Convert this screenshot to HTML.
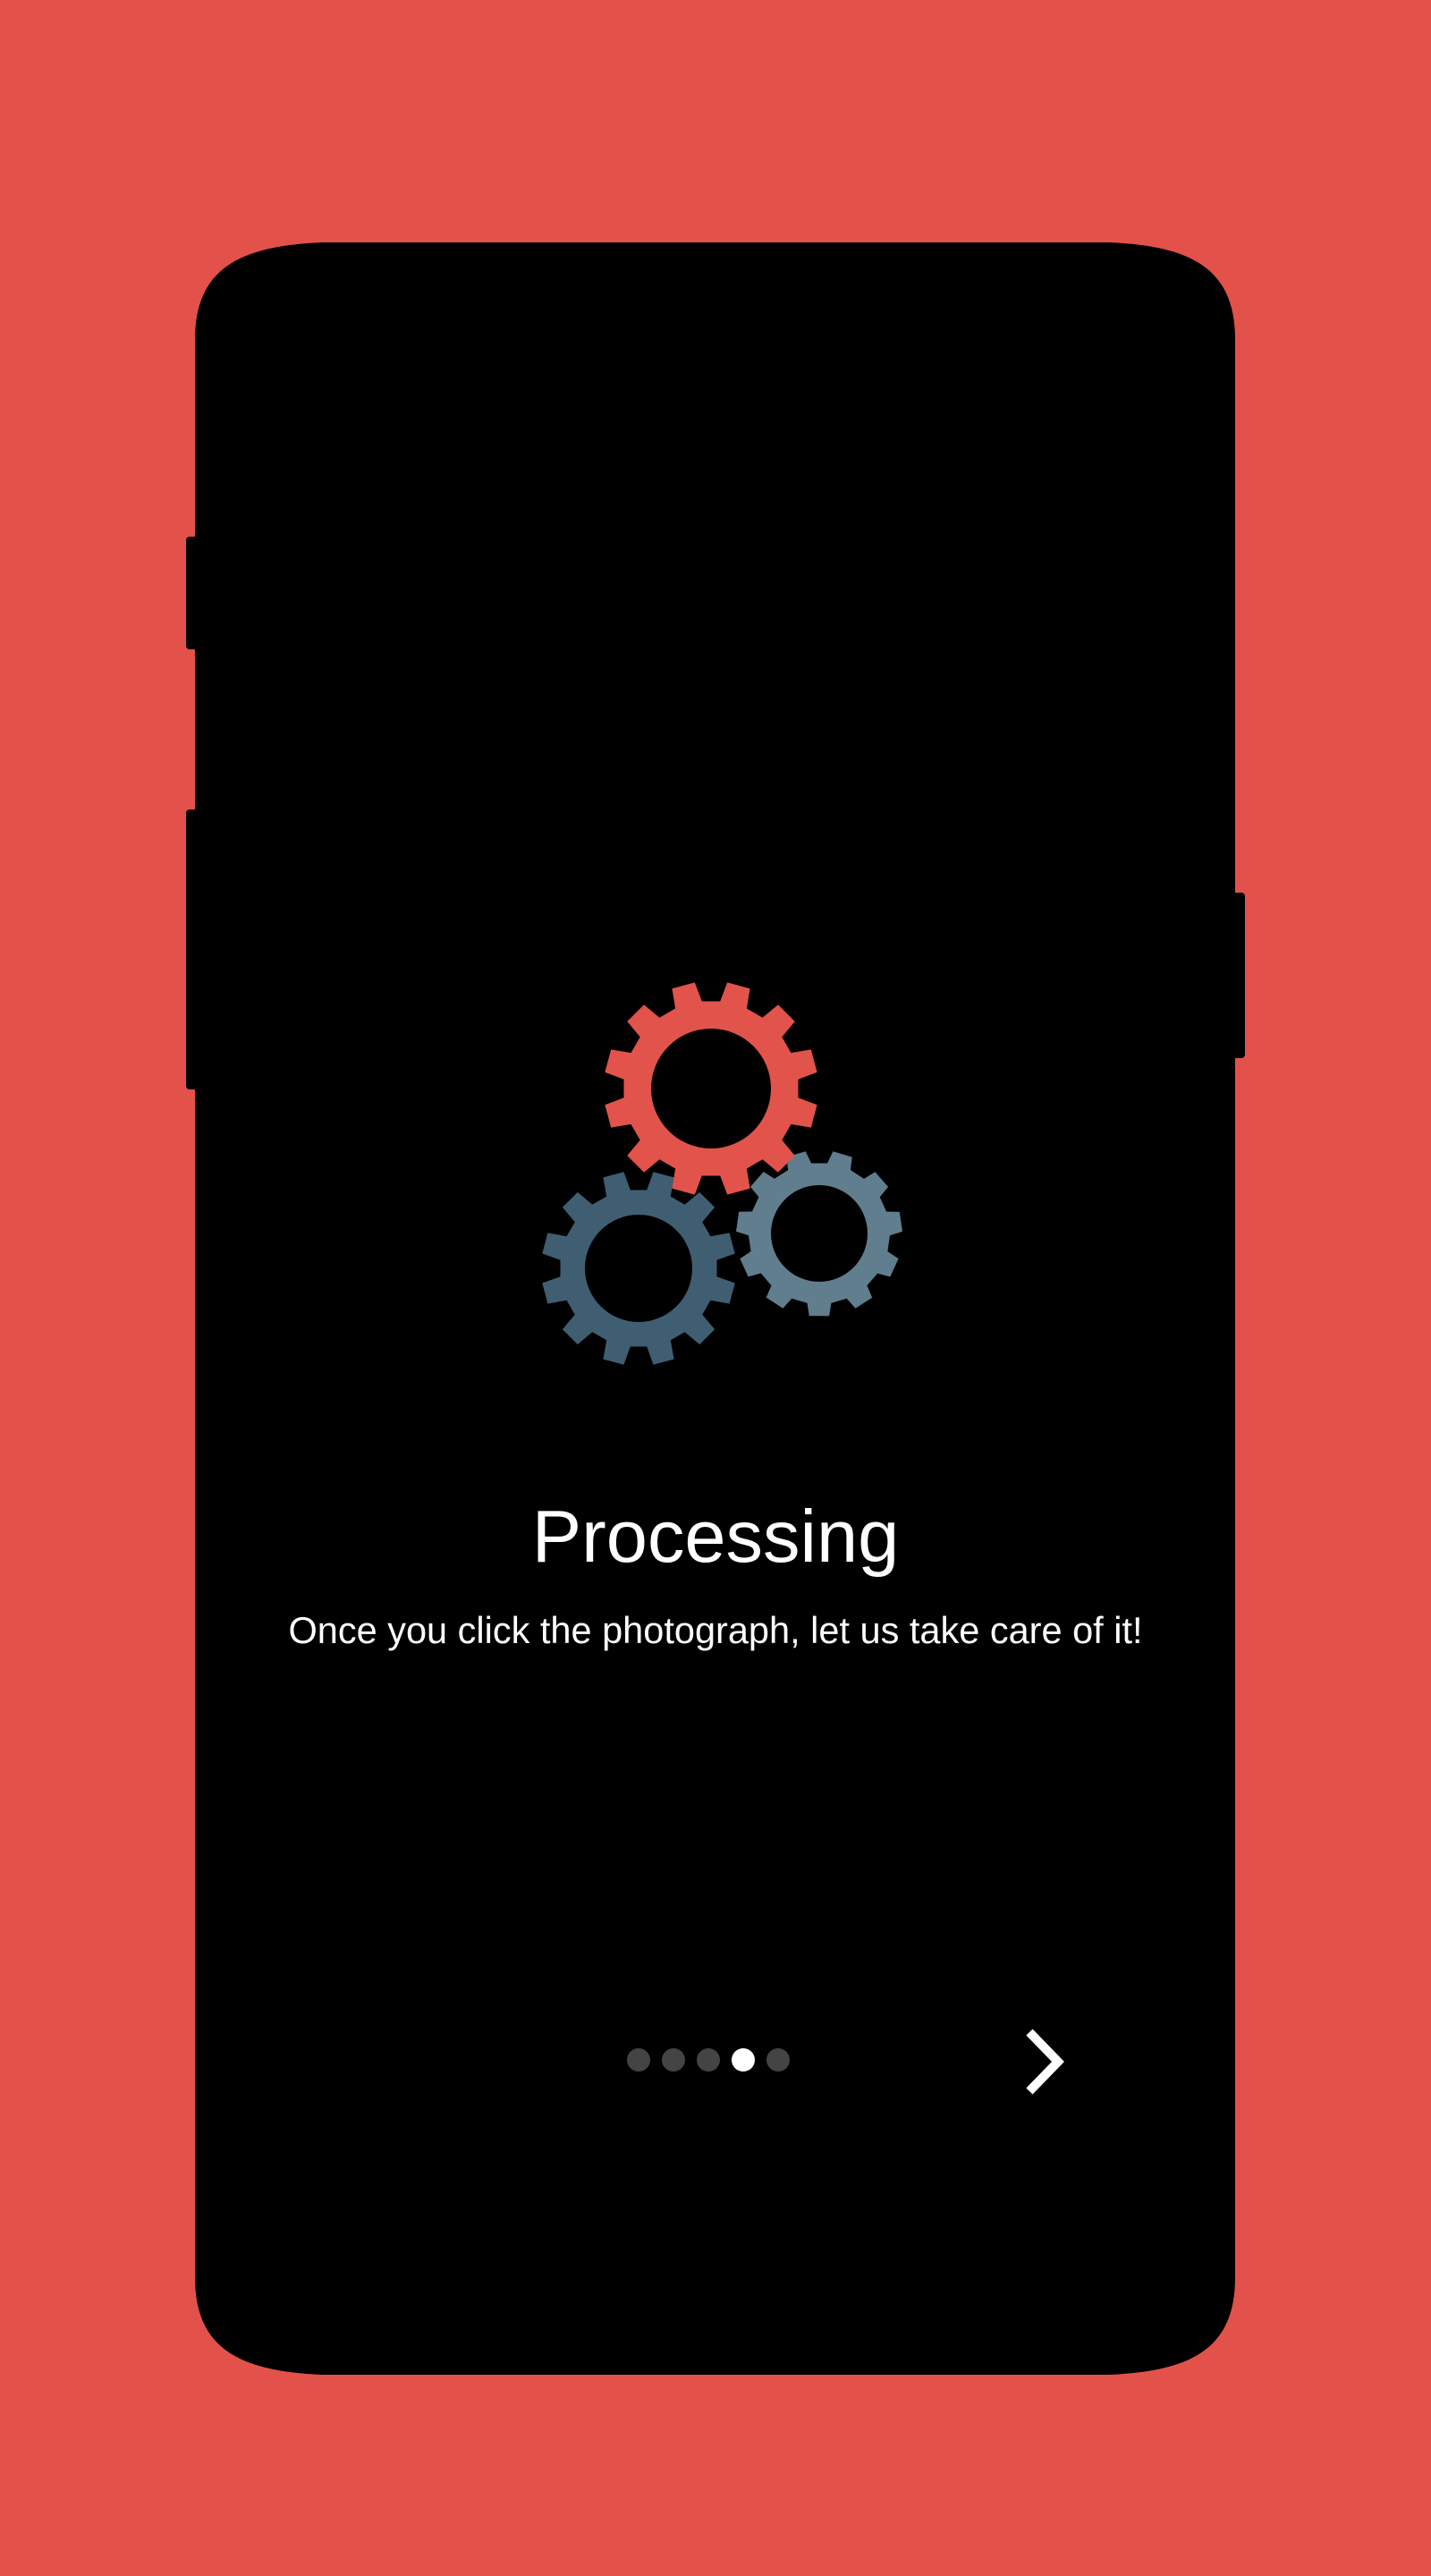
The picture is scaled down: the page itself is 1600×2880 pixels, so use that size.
<!DOCTYPE html>
<html><head><meta charset="utf-8"><style>
html,body{margin:0;padding:0;width:1600px;height:2880px;background:#E2524A;overflow:hidden}
svg{position:absolute;left:0;top:0}
.t{position:absolute;left:0;width:1600px;text-align:center;color:#fff;font-family:"Liberation Sans",sans-serif}
</style></head><body>
<svg width="1600" height="2880" viewBox="0 0 1600 2880">
<rect x="208" y="600" width="16" height="126" rx="4" fill="#000"/>
<rect x="208" y="905" width="16" height="313" rx="4" fill="#000"/>
<rect x="1375" y="998" width="17" height="185" rx="4" fill="#000"/>
<path d="M218,380 C218,300 268,275 360,271 L1240,271 C1332,275 1381,300 1381,380 L1381,2546 C1381,2626 1332,2651 1240,2655 L360,2655 C268,2651 218,2626 218,2546 Z" fill="#000"/>
<g id="gears"></g>
<g fill="#444"><circle cx="714" cy="2303" r="13"/><circle cx="753" cy="2303" r="13"/><circle cx="792" cy="2303" r="13"/><circle cx="870" cy="2303" r="13"/></g>
<circle cx="831" cy="2303" r="13" fill="#fff"/>
<path d="M1151,2272 L1183,2305 L1151,2338" fill="none" stroke="#fff" stroke-width="10"/>
</svg>
<div class="t" style="top:1670px;font-size:83px">Processing</div>
<div class="t" style="top:1799px;font-size:41.5px">Once you click the photograph, let us take care of it!</div>
<script>
function gear(cx,cy,ri,rr,ro,n,rot,col){
 var d="",p=2*Math.PI/n,r=rot*Math.PI/180;
 for(var i=0;i<n;i++){
  var a=r+i*p;
  var pts=[[rr,a-p*0.3],[ro,a-p*0.21],[ro,a+p*0.21],[rr,a+p*0.3]];
  pts.forEach(function(q,j){d+=(i==0&&j==0?"M":"L")+(cx+q[0]*Math.cos(q[1])).toFixed(1)+","+(cy+q[0]*Math.sin(q[1])).toFixed(1);});
 }
 d+="Z M"+(cx+ri)+","+cy+" A"+ri+","+ri+" 0 1,0 "+(cx-ri)+","+cy+" A"+ri+","+ri+" 0 1,0 "+(cx+ri)+","+cy+"Z";
 return '<path fill-rule="evenodd" fill="'+col+'" d="'+d+'"/>';
}
document.getElementById("gears").innerHTML=
 gear(916,1379,54,79,93,11,-73.6,"#617E8E")+
 gear(714,1418,60,88,109,12,-75,"#3F5E72")+
 gear(795,1217,67,98,120,12,-75,"#E2534B");
</script>
</body></html>
